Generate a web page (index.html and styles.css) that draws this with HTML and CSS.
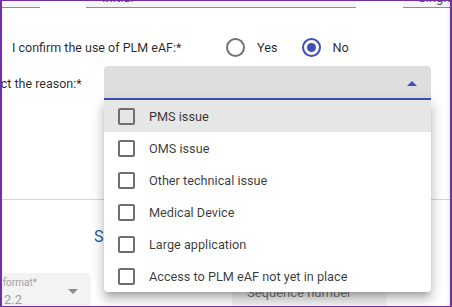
FILE: index.html
```html
<!DOCTYPE html>
<html lang="en">

<head>
    <meta charset="UTF-8">
    <meta name="viewport" content="width=device-width, initial-scale=1.0">
    <title>PLM eAF confirmation</title>
    <link rel="stylesheet" href="styles.css">
</head>

<body>
    <div class="frame">
        <div class="top-fields">
            <div class="field field-a"></div>
            <div class="field field-b">Initial</div>
            <div class="field field-c">Single</div>
        </div>

        <div class="confirm-row">
            <span class="row-label">I confirm the use of PLM eAF:*</span>
            <label class="radio"><span class="radio-circle"></span>Yes</label>
            <label class="radio checked"><span class="radio-circle"></span>No</label>
        </div>

        <div class="reason-row">
            <span class="reason-label">Select the reason:*</span>
            <div class="select">
                <span class="select-arrow"></span>

                <div class="select-panel">
                    <div class="option active"><span class="checkbox"></span>PMS issue</div>
                    <div class="option"><span class="checkbox"></span>OMS issue</div>
                    <div class="option"><span class="checkbox"></span>Other technical issue</div>
                    <div class="option"><span class="checkbox"></span>Medical Device</div>
                    <div class="option"><span class="checkbox"></span>Large application</div>
                    <div class="option"><span class="checkbox"></span>Access to PLM eAF not yet in place</div>
                </div>
            </div>
        </div>

        <div class="divider"></div>

        <h2 class="section-title">Submission details</h2>

        <div class="bottom-fields">
            <div class="form-field format-field">
                <div class="float-label"><span>Submission format*</span></div>
                <div class="field-value">2.2</div>
                <span class="down-arrow"></span>
            </div>
            <div class="form-field sequence-field">
                <span class="placeholder">Sequence number</span>
            </div>
        </div>

        <div class="scroll-edge"></div>
    </div>
</body>

</html>
```

FILE: styles.css
```css
body {
    margin: 0;
    font-family: Roboto, "Liberation Sans", sans-serif;
    color: rgba(0, 0, 0, 0.85);
    background-color: #fff;
}

.frame {
    position: relative;
    width: 452px;
    height: 307px;
    box-sizing: border-box;
    border: 1px solid #7030a0;
    border-left-width: 2px;
    border-right-width: 2px;
    overflow: hidden;
    background-color: #fff;
}

/* fields of the section above, scrolled mostly out of view */
.top-fields {
    display: flex;
    margin-top: -32px;
}

.field {
    flex-shrink: 0;
    height: 39px;
    box-sizing: border-box;
    padding: 21px 0 0 16px;
    font-size: 13px;
    line-height: 16px;
    color: rgba(0, 0, 0, 0.7);
    background-color: #f4f4f4;
    border-bottom: 1px solid #8e8e8e;
}

.field-a {
    width: 38px;
}

.field-b {
    width: 270px;
    margin-left: 46px;
}

.field-c {
    width: 60px;
    margin-left: 47px;
    padding-left: 15px;
}

.confirm-row {
    display: flex;
    align-items: center;
    height: 38px;
    margin-top: 20px;
    padding-left: 10px;
    font-size: 12.5px;
}

.row-label {
    width: 214px;
    flex-shrink: 0;
}

.radio {
    display: flex;
    align-items: center;
    gap: 12px;
    margin-right: 24px;
    font-size: 12.7px;
}

.radio-circle {
    width: 19px;
    height: 19px;
    box-sizing: border-box;
    border: 2px solid #747474;
    border-radius: 50%;
    display: flex;
    align-items: center;
    justify-content: center;
}

.radio.checked .radio-circle {
    border-color: #3f51b5;
}

.radio.checked .radio-circle::after {
    content: "";
    width: 9px;
    height: 9px;
    border-radius: 50%;
    background-color: #3f51b5;
}

.reason-row {
    display: flex;
    align-items: center;
    height: 34px;
    margin-left: -25px;
    font-size: 12.5px;
}

.reason-label {
    width: 127px;
    flex-shrink: 0;
    white-space: nowrap;
}

.select {
    position: relative;
    width: 327px;
    height: 34px;
    box-sizing: border-box;
    display: flex;
    align-items: center;
    justify-content: flex-end;
    padding-right: 14px;
    background-color: #dedede;
    border-radius: 4px 4px 0 0;
    border-bottom: 2px solid #3f51b5;
}

.select-arrow {
    width: 0;
    height: 0;
    margin-top: 2px;
    border-left: 5px solid transparent;
    border-right: 5px solid transparent;
    border-bottom: 5px solid #3f51b5;
}

.select-panel {
    position: absolute;
    top: calc(100% + 2px);
    left: 0;
    right: 0;
    z-index: 5;
    background-color: #fff;
    border-radius: 0 0 4px 4px;
    box-shadow: 0 5px 5px -3px rgba(0, 0, 0, 0.2),
        0 8px 10px 1px rgba(0, 0, 0, 0.14),
        0 3px 14px 2px rgba(0, 0, 0, 0.12);
}

.option {
    display: flex;
    align-items: center;
    height: 32px;
    padding-left: 14px;
    font-size: 12.7px;
    color: rgba(0, 0, 0, 0.78);
}

.option.active {
    background-color: #e6e6e6;
}

.checkbox {
    width: 17px;
    height: 17px;
    box-sizing: border-box;
    margin-right: 14px;
    border: 2px solid #6f6f6f;
    border-radius: 2px;
}

.divider {
    height: 1px;
    margin-top: 99px;
    margin-left: -2px;
    background-color: #cbd8ec;
}

.section-title {
    margin: 27px 0 0;
    padding-left: 92px;
    font-size: 16px;
    font-weight: 400;
    line-height: 20px;
    color: #1f5ba6;
}

.bottom-fields {
    display: flex;
    margin-top: 26px;
}

.form-field {
    position: relative;
    height: 40px;
    box-sizing: border-box;
    background-color: #f3f3f3;
    border-radius: 4px 4px 0 0;
    flex-shrink: 0;
}

.format-field {
    width: 89px;
    padding-top: 4px;
}

.float-label {
    display: flex;
    justify-content: flex-end;
    width: 35px;
    font-size: 10px;
    line-height: 11px;
    color: #a2a2a2;
    white-space: nowrap;
}

.field-value {
    margin: 4px 0 0 2px;
    font-size: 13px;
    line-height: 16px;
    color: #9e9e9e;
}

.down-arrow {
    position: absolute;
    left: 66px;
    top: 16px;
    width: 0;
    height: 0;
    border-left: 5px solid transparent;
    border-right: 5px solid transparent;
    border-top: 5px solid #8c8c8c;
}

.sequence-field {
    width: 155px;
    margin-left: 141px;
    padding: 9px 0 0 15px;
}

.placeholder {
    font-size: 13px;
    line-height: 16px;
    color: #777;
}

.scroll-edge {
    position: absolute;
    top: 0;
    right: 0;
    bottom: 0;
    width: 4px;
    background: linear-gradient(to right, rgba(0, 0, 0, 0), rgba(0, 0, 0, 0.08));
}
```
